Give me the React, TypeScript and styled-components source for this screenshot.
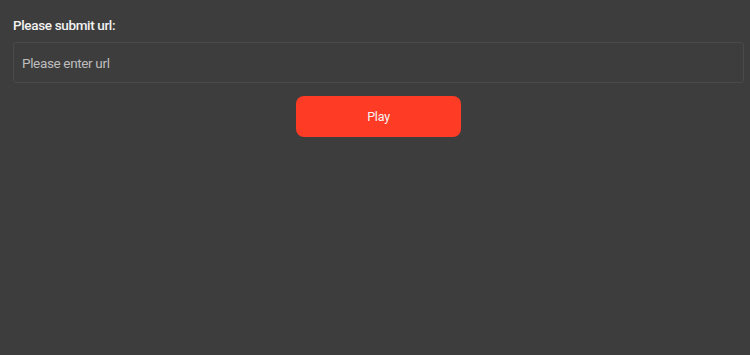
import React from "react";
import styled, { createGlobalStyle } from "styled-components";

const GlobalStyle = createGlobalStyle`
  html, body {
    margin: 0;
    padding: 0;
    background: #3d3d3d;
    font-family: Roboto, "Noto Sans", sans-serif;
  }
`;

const Page = styled.div`
  width: 750px;
  height: 355px;
  box-sizing: border-box;
  padding: 17px 6px 0 13px;
  display: flex;
  flex-direction: column;
`;

const Label = styled.label`
  color: #f2f2f2;
  font-size: 13.5px;
  font-weight: 500;
  letter-spacing: -0.35px;
  line-height: 17px;
  margin-bottom: 8px;
`;

const UrlInput = styled.input`
  box-sizing: border-box;
  height: 41px;
  width: 100%;
  background: #3d3d3d;
  border: 1px solid #4a4a4a;
  border-radius: 3px;
  padding: 0 8px;
  color: #eee;
  font-family: inherit;
  font-size: 13.5px;
  letter-spacing: -0.35px;
  outline: none;
  &::placeholder {
    color: #bdbdbd;
  }
`;

const Actions = styled.div`
  display: flex;
  justify-content: center;
  margin-top: 13px;
`;

const PlayButton = styled.button`
  width: 165px;
  height: 41px;
  background: #fe3b24;
  border: 0;
  border-radius: 8px;
  color: #f4f4f4;
  font-family: inherit;
  font-size: 12.5px;
  letter-spacing: -0.2px;
  cursor: pointer;
`;

export default function App() {
  return (
    <>
      <GlobalStyle />
      <Page>
        <Label>Please submit url:</Label>
        <UrlInput placeholder="Please enter url" />
        <Actions>
          <PlayButton>Play</PlayButton>
        </Actions>
      </Page>
    </>
  );
}
